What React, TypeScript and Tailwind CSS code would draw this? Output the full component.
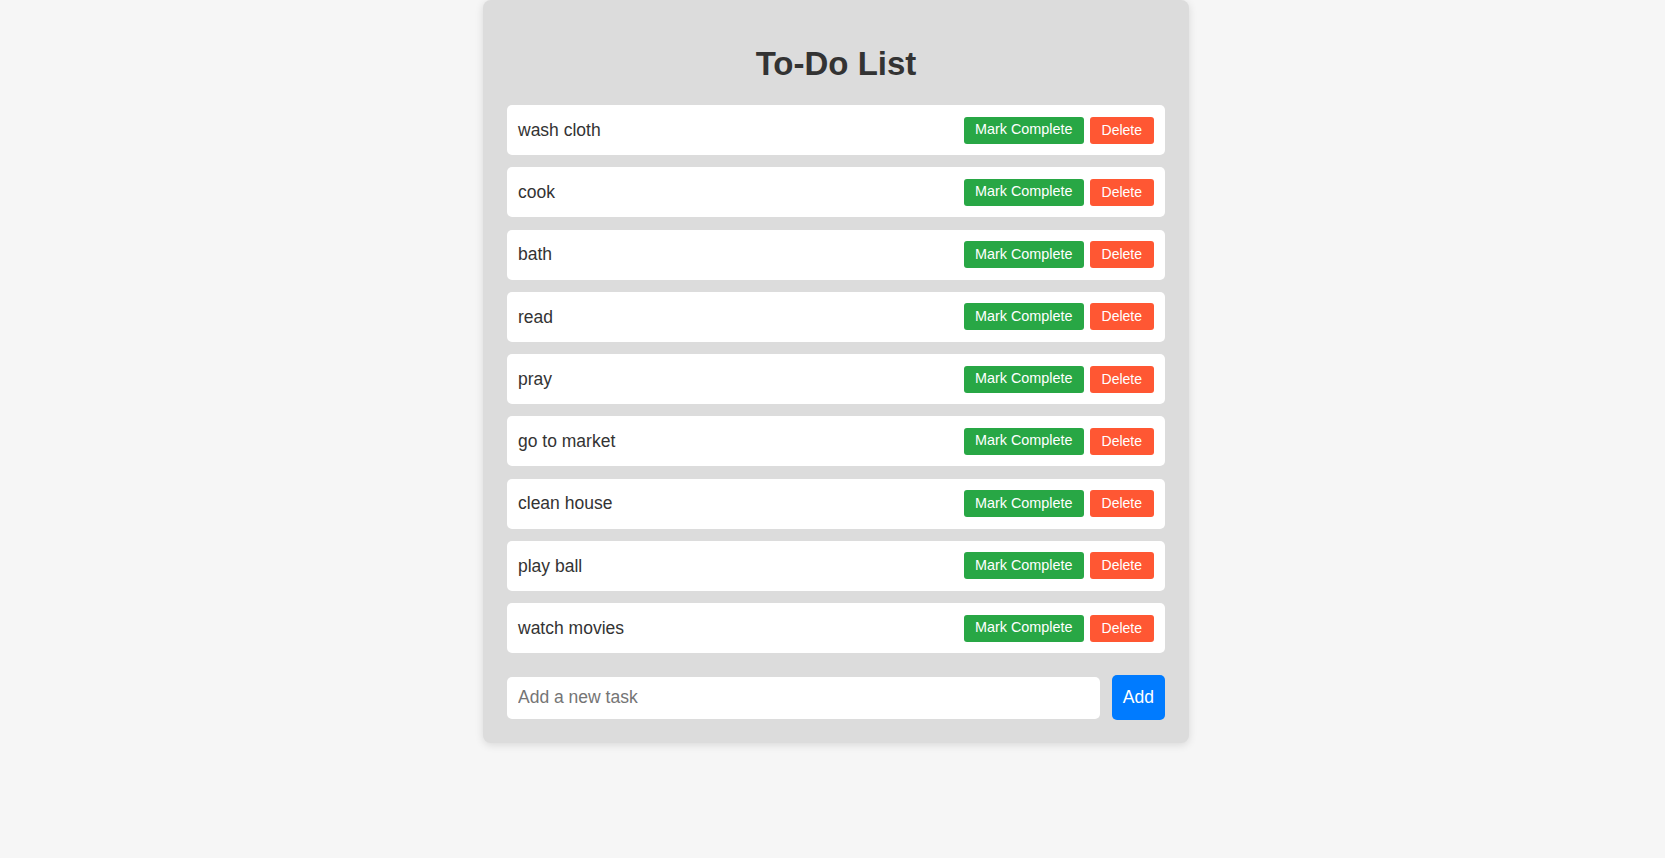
import React from "react";

const tasks = [
  "wash cloth",
  "cook",
  "bath",
  "read",
  "pray",
  "go to market",
  "clean house",
  "play ball",
  "watch movies",
];

export default function App() {
  return (
    <div
      className="min-h-[858px] bg-[#f6f6f6] flex justify-center pl-[7px]"
      style={{ fontFamily: '"Liberation Sans", Arial, sans-serif' }}
    >
      <div className="w-[706px] h-fit bg-[#dcdcdc] rounded-[8px] shadow-[0_2px_8px_rgba(0,0,0,0.12)] px-[24px] pt-[45px] pb-[23px]">
        <h1 className="text-[33px] leading-[37px] font-bold text-center text-[#333] mb-[23px]">
          To-Do List
        </h1>
        <ul className="flex flex-col gap-[12.25px]">
          {tasks.map((t) => (
            <li
              key={t}
              className="h-[50px] bg-white rounded-[5px] flex items-center justify-between pl-[11px] pr-[11px]"
            >
              <span className="text-[17.5px] text-[#333]">{t}</span>
              <div className="flex items-center gap-[6px]">
                <button className="h-[27px] px-[11px] text-[14.4px] text-white bg-[#28a745] rounded-[3px]">
                  Mark Complete
                </button>
                <button className="h-[27px] px-[12px] text-[14px] text-white bg-[#ff5733] rounded-[3px]">
                  Delete
                </button>
              </div>
            </li>
          ))}
        </ul>
        <div className="mt-[22px] flex items-center gap-[12px]">
          <input
            type="text"
            placeholder="Add a new task"
            className="flex-1 h-[42px] bg-white rounded-[5px] px-[11px] text-[17.5px] text-[#333] placeholder:text-[#757575] outline-none"
          />
          <button className="h-[45px] px-[11px] bg-[#007bff] rounded-[5px] text-white text-[17.5px]">
            Add
          </button>
        </div>
      </div>
    </div>
  );
}
